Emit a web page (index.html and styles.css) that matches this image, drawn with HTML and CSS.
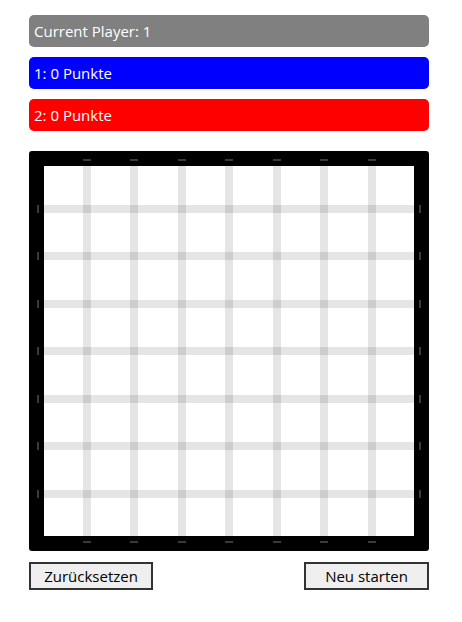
FILE: index.html
```html
<!DOCTYPE html>
<html lang="de">

<head>
    <meta charset="utf-8">
    <meta name="viewport" content="width=device-width, initial-scale=1.0">
    <title>Kästchen</title>
    <link rel="stylesheet" href="styles.css">
</head>

<body>
    <main class="spiel">
        <!--Anzeige-->
        <div class="info current">Current Player: 1</div>
        <div class="info p1">1: 0 Punkte</div>
        <div class="info p2">2: 0 Punkte</div>

        <!--Spielfeld-->
        <div class="brett"></div>

        <div class="knapper">
            <button class="knap">Zurücksetzen</button>
            <button class="knap">Neu starten</button>
        </div>
    </main>

    <script>
        let brett = document.querySelector(".brett"),
            felder = 8,
            abstand = 47.5;

        // linien bauen
        function baueBrett() {
            for (let i = 1; i < felder; i++) {
                let pos = i * abstand - 9;

                let v = document.createElement("div");
                v.className = "linie senkrecht";
                v.style.left = pos + "px";
                brett.appendChild(v);

                let h = document.createElement("div");
                h.className = "linie waagerecht";
                h.style.top = pos + "px";
                brett.appendChild(h);

                let m1 = document.createElement("div");
                m1.className = "marke oben";
                m1.style.left = pos + "px";
                brett.appendChild(m1);

                let m2 = document.createElement("div");
                m2.className = "marke unten";
                m2.style.left = pos + "px";
                brett.appendChild(m2);

                let m3 = document.createElement("div");
                m3.className = "marke links";
                m3.style.top = pos + "px";
                brett.appendChild(m3);

                let m4 = document.createElement("div");
                m4.className = "marke rechts";
                m4.style.top = pos + "px";
                brett.appendChild(m4);
            }
        }

        baueBrett();
    </script>
</body>

</html>
```

FILE: styles.css
```css
body {
    margin: 0;
    background-color: white;
    font-family: "Open Sans", "Noto Sans", sans-serif;
}

.spiel {
    width: 400px;
    padding: 15px 0 0 29px;
}

.info {
    height: 32px;
    line-height: 32px;
    margin-bottom: 10px;
    padding-left: 5px;
    border-radius: 5px;
    color: white;
    font-size: 15px;
}

.current {
    background-color: #808080;
}

.p1 {
    background-color: #0000ff;
}

.p2 {
    background-color: #ff0000;
}

/* BRETT */

.brett {
    position: relative;
    width: 370px;
    height: 370px;
    margin-top: 20px;
    border: 15px solid black;
    border-radius: 3px;
    background-color: white;
}

.linie {
    position: absolute;
    background-color: rgba(0, 0, 0, .1);
}

.senkrecht {
    top: 0;
    width: 8px;
    height: 100%;
}

.waagerecht {
    left: 0;
    height: 8px;
    width: 100%;
}

.marke {
    position: absolute;
    background-color: #3a3a3a;
}

.oben,
.unten {
    width: 8px;
    height: 2px;
}

.oben {
    top: -7px;
}

.unten {
    bottom: -7px;
}

.links,
.rechts {
    width: 2px;
    height: 8px;
}

.links {
    left: -7px;
}

.rechts {
    right: -7px;
}

/* KNAPPER */

.knapper {
    display: flex;
    justify-content: space-between;
    margin-top: 11px;
}

.knap {
    width: 124px;
    height: 28px;
    padding: 0;
    background-color: #efefef;
    border: 2px solid #333;
    color: black;
    font-family: "Open Sans", "Noto Sans", sans-serif;
    font-size: 15px;
}

.knap:last-child {
    width: 125px;
}
```
